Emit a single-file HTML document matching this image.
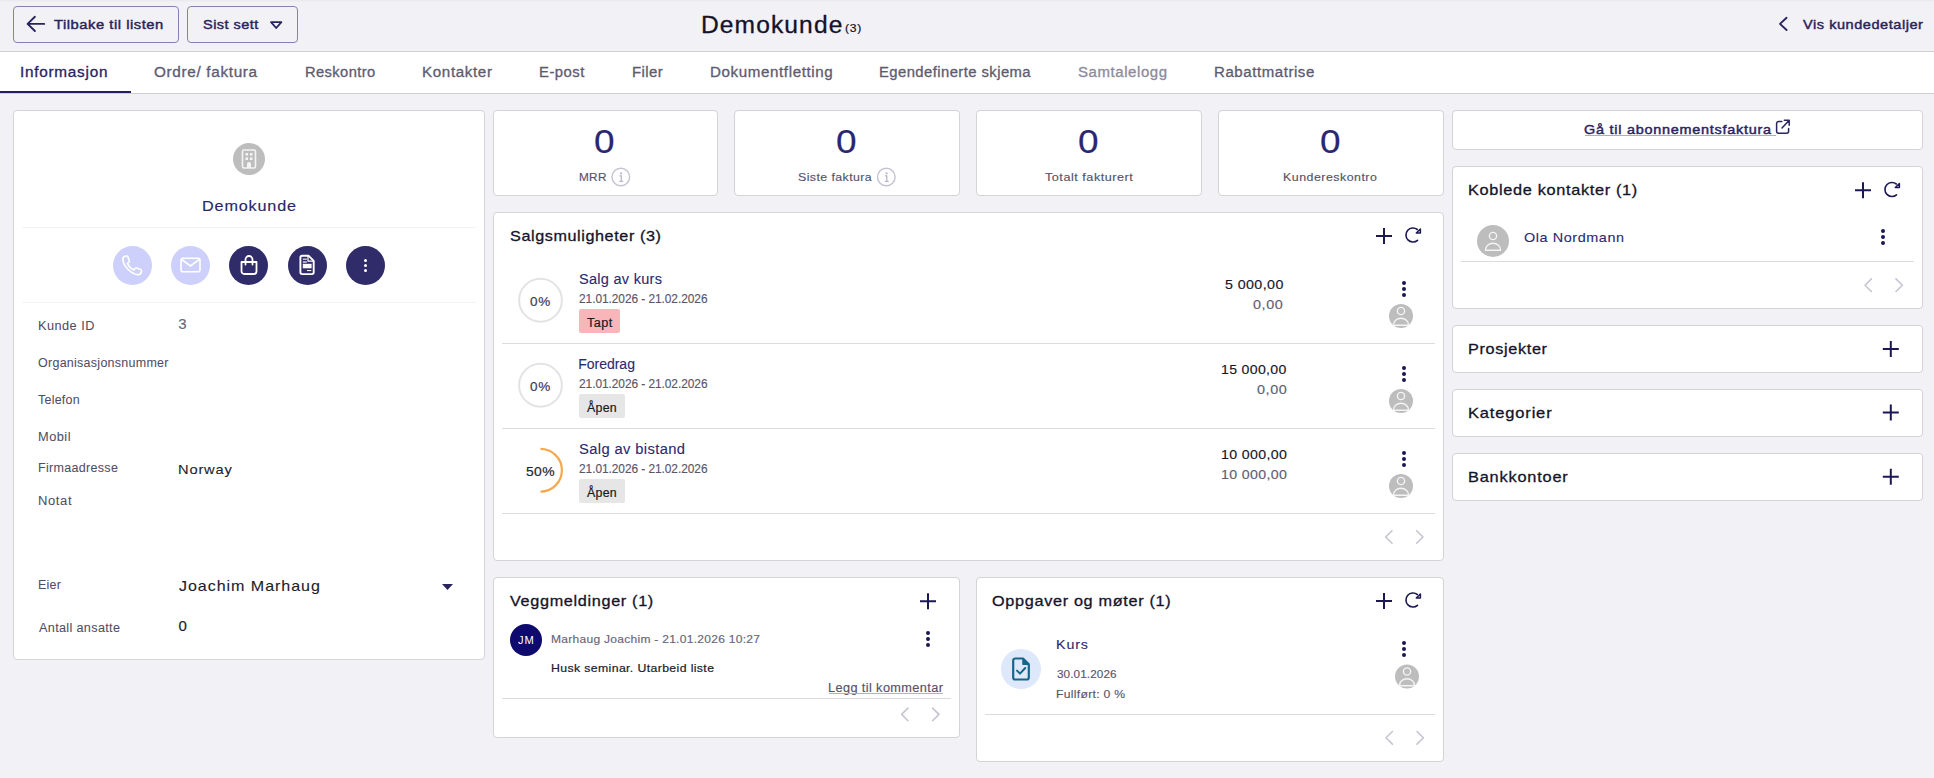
<!DOCTYPE html>
<html><head><meta charset="utf-8"><style>
html,body{margin:0;padding:0;}
body{width:1934px;height:778px;position:relative;overflow:hidden;background:#f2f1f6;font-family:"Liberation Sans",sans-serif;}
.t{position:absolute;white-space:nowrap;line-height:normal;}
.r{position:absolute;display:block;}
</style></head><body>
<div class="r" style="left:0px;top:0px;width:1934px;height:52px;background:#f2f1f6;"></div>
<div class="r" style="left:0px;top:51px;width:1934px;height:1px;background:#cdcdd2;"></div>
<div class="r" style="left:0px;top:50px;width:1934px;height:1px;background:#f4f3f7;"></div>
<div class="r" style="left:0px;top:0px;width:1934px;height:1px;background:#ebeaf0;"></div>
<div class="r" style="left:0px;top:1px;width:1934px;height:1px;background:#efeef3;"></div>
<div class="r" style="left:13px;top:6px;width:166px;height:37px;border:1.2px solid #8682ab;border-radius:4px;box-sizing:border-box;"></div>
<svg class="r" style="left:26px;top:15px;overflow:visible;" width="21" height="19" viewBox="0 0 21 19"><path d="M1.6 8.9 H18.2 M8.9 1.8 L1.6 8.9 L8.9 16" fill="none" stroke="#29245e" stroke-width="1.9" stroke-linecap="round" stroke-linejoin="round"/></svg>
<div class="t" style="left:54.17px;top:16.90px;font-size:13.5px;color:#29245e;transform:scaleX(1.0917);transform-origin:0 0;letter-spacing:0.489px;-webkit-text-stroke:0.45px #29245e;">Tilbake til listen</div>
<div class="r" style="left:187px;top:6px;width:111px;height:37px;border:1.2px solid #8682ab;border-radius:4px;box-sizing:border-box;"></div>
<div class="t" style="left:202.75px;top:17.00px;font-size:13.5px;color:#29245e;transform:scaleX(1.0732);transform-origin:0 0;letter-spacing:0.433px;-webkit-text-stroke:0.45px #29245e;">Sist sett</div>
<svg class="r" style="left:269px;top:20px;overflow:visible;" width="16" height="11" viewBox="0 0 16 11"><path d="M2 2.2 H12.4 L7.2 8 Z" fill="none" stroke="#29245e" stroke-width="1.8" stroke-linejoin="round"/></svg>
<div class="t" style="left:700.57px;top:11.90px;font-size:23px;color:#14132a;transform:scaleX(1.0683);transform-origin:0 0;letter-spacing:1.034px;-webkit-text-stroke:0.3px #14132a;">Demokunde</div>
<div class="t" style="left:844.94px;top:22.00px;font-size:11px;color:#14132a;transform:scaleX(1.1022);transform-origin:0 0;letter-spacing:0.618px;-webkit-text-stroke:0.2px #14132a;">(3)</div>
<svg class="r" style="left:1777px;top:15px;overflow:visible;" width="13" height="19" viewBox="0 0 13 19"><path d="M9.6 2.8 L3 8.9 L9.6 15" fill="none" stroke="#29245e" stroke-width="1.9" stroke-linecap="round" stroke-linejoin="round"/></svg>
<div class="t" style="left:1802.93px;top:17.00px;font-size:13.5px;color:#29245e;transform:scaleX(1.0774);transform-origin:0 0;letter-spacing:0.498px;-webkit-text-stroke:0.45px #29245e;">Vis kundedetaljer</div>
<div class="r" style="left:0px;top:52px;width:1934px;height:41px;background:#fff;"></div>
<div class="r" style="left:0px;top:93px;width:1934px;height:1px;background:#cfcfd4;"></div>
<div class="r" style="left:0px;top:91px;width:131px;height:2px;background:#231f60;"></div>
<div class="t" style="left:20.08px;top:63.90px;font-size:14px;color:#29245e;transform:scaleX(1.0946);transform-origin:0 0;letter-spacing:0.671px;-webkit-text-stroke:0.3px #29245e;">Informasjon</div>
<div class="t" style="left:153.87px;top:63.90px;font-size:14px;color:#5e5b70;transform:scaleX(1.0930);transform-origin:0 0;letter-spacing:0.613px;-webkit-text-stroke:0.3px #5e5b70;">Ordre/ faktura</div>
<div class="t" style="left:304.79px;top:63.90px;font-size:14px;color:#5e5b70;transform:scaleX(1.0496);transform-origin:0 0;letter-spacing:0.385px;-webkit-text-stroke:0.3px #5e5b70;">Reskontro</div>
<div class="t" style="left:421.75px;top:63.90px;font-size:14px;color:#5e5b70;transform:scaleX(1.0816);transform-origin:0 0;letter-spacing:0.597px;-webkit-text-stroke:0.3px #5e5b70;">Kontakter</div>
<div class="t" style="left:538.78px;top:63.90px;font-size:14px;color:#5e5b70;transform:scaleX(1.0595);transform-origin:0 0;letter-spacing:0.466px;-webkit-text-stroke:0.3px #5e5b70;">E-post</div>
<div class="t" style="left:631.57px;top:63.90px;font-size:14px;color:#5e5b70;transform:scaleX(1.0661);transform-origin:0 0;letter-spacing:0.428px;-webkit-text-stroke:0.3px #5e5b70;">Filer</div>
<div class="t" style="left:709.75px;top:63.90px;font-size:14px;color:#5e5b70;transform:scaleX(1.0816);transform-origin:0 0;letter-spacing:0.560px;-webkit-text-stroke:0.3px #5e5b70;">Dokumentfletting</div>
<div class="t" style="left:878.78px;top:63.90px;font-size:14px;color:#5e5b70;transform:scaleX(1.0583);transform-origin:0 0;letter-spacing:0.412px;-webkit-text-stroke:0.3px #5e5b70;">Egendefinerte skjema</div>
<div class="t" style="left:1078.23px;top:63.90px;font-size:14px;color:#8d8a9c;transform:scaleX(1.0703);transform-origin:0 0;letter-spacing:0.536px;-webkit-text-stroke:0.3px #8d8a9c;">Samtalelogg</div>
<div class="t" style="left:1214.16px;top:63.90px;font-size:14px;color:#5e5b70;transform:scaleX(1.0736);transform-origin:0 0;letter-spacing:0.524px;-webkit-text-stroke:0.3px #5e5b70;">Rabattmatrise</div>
<div class="r" style="left:0px;top:94px;width:1934px;height:684px;background:#f2f1f6;"></div>
<div class="r" style="left:13px;top:110px;width:472px;height:550px;background:#fff;border:1px solid #d3d3d8;border-radius:4px;box-sizing:border-box;"></div>
<div class="r" style="left:233px;top:143px;width:32px;height:32px;background:#bdbdbd;border-radius:50%;"></div>
<svg class="r" style="left:241px;top:149px;overflow:visible;" width="16" height="21" viewBox="0 0 16 21"><g transform="translate(0.500,0.000)"><rect x="1" y="1" width="13" height="18" rx="1.5" fill="none" stroke="#f4f4f4" stroke-width="1.6"/><rect x="4" y="4" width="2.6" height="2.6" fill="#f4f4f4"/><rect x="8.4" y="4" width="2.6" height="2.6" fill="#f4f4f4"/><rect x="4" y="8.4" width="2.6" height="2.6" fill="#f4f4f4"/><rect x="8.4" y="8.4" width="2.6" height="2.6" fill="#f4f4f4"/><path d="M5.5 19 V15 a2 2 0 0 1 4 0 V19 Z" fill="#f4f4f4"/></g></svg>
<div class="t" style="left:201.66px;top:196.80px;font-size:15px;color:#2a2668;transform:scaleX(1.0793);transform-origin:0 0;letter-spacing:0.783px;-webkit-text-stroke:0.15px #2a2668;">Demokunde</div>
<div class="r" style="left:22px;top:227px;width:454px;height:1px;background:#f3f3f5;"></div>
<div class="r" style="left:22px;top:302px;width:454px;height:1px;background:#f3f3f5;"></div>
<div class="r" style="left:112.5px;top:246px;width:39px;height:39px;background:#cdd0fa;border-radius:50%;"></div>
<div class="r" style="left:171.0px;top:246px;width:39px;height:39px;background:#cdd0fa;border-radius:50%;"></div>
<div class="r" style="left:229.0px;top:246px;width:39px;height:39px;background:#302b69;border-radius:50%;"></div>
<div class="r" style="left:287.5px;top:246px;width:39px;height:39px;background:#302b69;border-radius:50%;"></div>
<div class="r" style="left:346.0px;top:246px;width:39px;height:39px;background:#302b69;border-radius:50%;"></div>
<svg class="r" style="left:120px;top:253px;overflow:visible;" width="25" height="25" viewBox="0 0 25 25"><g transform="translate(0.000,0.500)"><g transform="translate(0.2,0.2) scale(1.1)"><path d="M4.8 2.2 C3.3 2.6 2.2 3.9 2.4 5.6 C3 11.2 9.8 18.4 15.8 19.1 C17.5 19.3 18.8 18.2 19.2 16.7 L19.4 15.8 C19.5 15.2 19.2 14.6 18.6 14.4 L15 13.1 C14.4 12.9 13.9 13.1 13.5 13.5 L12.5 14.8 C10 13.7 7.6 11.3 6.5 8.8 L7.8 7.8 C8.3 7.4 8.5 6.9 8.3 6.3 L7 2.8 C6.8 2.3 6.2 2 5.6 2.1 Z" fill="none" stroke="#fff" stroke-width="1.45" stroke-linejoin="round"/></g></g></svg>
<svg class="r" style="left:180px;top:257px;overflow:visible;" width="22" height="17" viewBox="0 0 22 17"><rect x="1" y="1.2" width="19" height="13.6" rx="2" fill="none" stroke="#fff" stroke-width="1.6"/><path d="M1.8 2.5 L10.5 9 L19.2 2.5" fill="none" stroke="#fff" stroke-width="1.6"/></svg>
<svg class="r" style="left:239px;top:254px;overflow:visible;" width="20" height="22" viewBox="0 0 20 22"><g transform="translate(0.500,0.000)"><path d="M2 8 H17 V17.2 a2.8 2.8 0 0 1 -2.8 2.8 H4.8 a2.8 2.8 0 0 1 -2.8 -2.8 Z" fill="none" stroke="#fff" stroke-width="1.8" stroke-linejoin="round"/><path d="M6 10.5 V5.5 a3.5 3.5 0 0 1 7 0 V10.5" fill="none" stroke="#fff" stroke-width="1.8" stroke-linecap="round"/></g></svg>
<svg class="r" style="left:298px;top:254px;overflow:visible;" width="19" height="23" viewBox="0 0 19 23"><path d="M2.4 3.5 a1.8 1.8 0 0 1 1.8 -1.8 H10.5 L15.7 6.9 V18.3 a1.8 1.8 0 0 1 -1.8 1.8 H4.2 a1.8 1.8 0 0 1 -1.8 -1.8 Z" fill="none" stroke="#fff" stroke-width="1.9" stroke-linejoin="round"/><path d="M10 2 V7.1 H15.4" fill="none" stroke="#fff" stroke-width="1.2"/><rect x="4.8" y="4.6" width="4" height="1.1" fill="#fff"/><rect x="4.8" y="7.4" width="4" height="1.2" fill="#fff"/><rect x="4.8" y="9.8" width="8.8" height="4.5" fill="#fff"/><rect x="9" y="16" width="4.3" height="1.1" fill="#fff"/></svg>
<div class="r" style="left:363.8px;top:258.6px;width:3.4px;height:3.4px;background:#fff;border-radius:50%;"></div>
<div class="r" style="left:363.8px;top:263.8px;width:3.4px;height:3.4px;background:#fff;border-radius:50%;"></div>
<div class="r" style="left:363.8px;top:269.0px;width:3.4px;height:3.4px;background:#fff;border-radius:50%;"></div>
<div class="t" style="left:37.55px;top:318.90px;font-size:12px;color:#4e4d62;transform:scaleX(1.0622);transform-origin:0 0;letter-spacing:0.431px;-webkit-text-stroke:0.05px #4e4d62;">Kunde ID</div>
<div class="t" style="left:38.01px;top:355.90px;font-size:12px;color:#4e4d62;transform:scaleX(1.0398);transform-origin:0 0;letter-spacing:0.265px;-webkit-text-stroke:0.05px #4e4d62;">Organisasjonsnummer</div>
<div class="t" style="left:38.32px;top:392.80px;font-size:12px;color:#4e4d62;transform:scaleX(1.0372);transform-origin:0 0;letter-spacing:0.233px;-webkit-text-stroke:0.05px #4e4d62;">Telefon</div>
<div class="t" style="left:37.54px;top:429.90px;font-size:12px;color:#4e4d62;transform:scaleX(1.0670);transform-origin:0 0;letter-spacing:0.450px;-webkit-text-stroke:0.05px #4e4d62;">Mobil</div>
<div class="t" style="left:37.57px;top:460.90px;font-size:12px;color:#4e4d62;transform:scaleX(1.0439);transform-origin:0 0;letter-spacing:0.287px;-webkit-text-stroke:0.05px #4e4d62;">Firmaadresse</div>
<div class="t" style="left:37.53px;top:493.80px;font-size:12px;color:#4e4d62;transform:scaleX(1.0835);transform-origin:0 0;letter-spacing:0.576px;-webkit-text-stroke:0.05px #4e4d62;">Notat</div>
<div class="t" style="left:37.57px;top:578.10px;font-size:12px;color:#4e4d62;transform:scaleX(1.0375);transform-origin:0 0;letter-spacing:0.252px;-webkit-text-stroke:0.05px #4e4d62;">Eier</div>
<div class="t" style="left:38.57px;top:621.00px;font-size:12px;color:#4e4d62;transform:scaleX(1.0556);transform-origin:0 0;letter-spacing:0.309px;-webkit-text-stroke:0.05px #4e4d62;">Antall ansatte</div>
<div class="t" style="left:178.24px;top:314.80px;font-size:15px;color:#63667a;-webkit-text-stroke:0.1px #63667a;">3</div>
<div class="t" style="left:178.09px;top:461.90px;font-size:13.5px;color:#1d1c2e;transform:scaleX(1.0858);transform-origin:0 0;letter-spacing:0.765px;-webkit-text-stroke:0.1px #1d1c2e;">Norway</div>
<div class="t" style="left:178.96px;top:577.60px;font-size:14.5px;color:#1d1c2e;transform:scaleX(1.1060);transform-origin:0 0;letter-spacing:0.864px;-webkit-text-stroke:0.1px #1d1c2e;">Joachim Marhaug</div>
<svg class="r" style="left:441px;top:583px;overflow:visible;" width="14" height="9" viewBox="0 0 14 9"><path d="M1 1 H12 L6.5 7 Z" fill="#29245e"/></svg>
<div class="t" style="left:178.60px;top:616.60px;font-size:15px;color:#1d1c2e;-webkit-text-stroke:0.2px #1d1c2e;">0</div>
<div class="r" style="left:493px;top:110px;width:225px;height:86px;background:#fff;border:1px solid #d3d3d8;border-radius:4px;box-sizing:border-box;"></div>
<div class="t" style="left:594.28px;top:123.00px;font-size:33px;color:#2a2770;-webkit-text-stroke:0.2px #2a2770;transform:scaleX(1.12);transform-origin:0 0;">0</div>
<div class="t" style="left:579.33px;top:170.80px;font-size:11.5px;color:#55536a;transform:scaleX(1.0241);transform-origin:0 0;letter-spacing:0.297px;-webkit-text-stroke:0.15px #55536a;">MRR</div>
<svg class="r" style="left:610px;top:167px;overflow:visible;" width="21" height="21" viewBox="0 0 21 21"><g transform="translate(0.800,0.000)"><circle cx="10" cy="10" r="8.8" fill="none" stroke="#c5c3d3" stroke-width="1.4"/><circle cx="10.3" cy="6.3" r="1.1" fill="#b9b7c9"/><path d="M8.6 8.9 H10.5 V14.4 M8.4 14.4 H12.4" fill="none" stroke="#b9b7c9" stroke-width="1.3"/></g></svg>
<div class="r" style="left:734px;top:110px;width:226px;height:86px;background:#fff;border:1px solid #d3d3d8;border-radius:4px;box-sizing:border-box;"></div>
<div class="t" style="left:835.78px;top:123.00px;font-size:33px;color:#2a2770;-webkit-text-stroke:0.2px #2a2770;transform:scaleX(1.12);transform-origin:0 0;">0</div>
<div class="t" style="left:797.94px;top:170.80px;font-size:11.5px;color:#55536a;transform:scaleX(1.0743);transform-origin:0 0;letter-spacing:0.393px;-webkit-text-stroke:0.15px #55536a;">Siste faktura</div>
<svg class="r" style="left:876px;top:167px;overflow:visible;" width="21" height="21" viewBox="0 0 21 21"><g transform="translate(0.300,0.000)"><circle cx="10" cy="10" r="8.8" fill="none" stroke="#c5c3d3" stroke-width="1.4"/><circle cx="10.3" cy="6.3" r="1.1" fill="#b9b7c9"/><path d="M8.6 8.9 H10.5 V14.4 M8.4 14.4 H12.4" fill="none" stroke="#b9b7c9" stroke-width="1.3"/></g></svg>
<div class="r" style="left:976px;top:110px;width:226px;height:86px;background:#fff;border:1px solid #d3d3d8;border-radius:4px;box-sizing:border-box;"></div>
<div class="t" style="left:1077.78px;top:123.00px;font-size:33px;color:#2a2770;-webkit-text-stroke:0.2px #2a2770;transform:scaleX(1.12);transform-origin:0 0;">0</div>
<div class="t" style="left:1045.02px;top:170.80px;font-size:11.5px;color:#55536a;transform:scaleX(1.0979);transform-origin:0 0;letter-spacing:0.473px;-webkit-text-stroke:0.15px #55536a;">Totalt fakturert</div>
<div class="r" style="left:1218px;top:110px;width:226px;height:86px;background:#fff;border:1px solid #d3d3d8;border-radius:4px;box-sizing:border-box;"></div>
<div class="t" style="left:1319.78px;top:123.00px;font-size:33px;color:#2a2770;-webkit-text-stroke:0.2px #2a2770;transform:scaleX(1.12);transform-origin:0 0;">0</div>
<div class="t" style="left:1283.48px;top:170.80px;font-size:11.5px;color:#55536a;transform:scaleX(1.0756);transform-origin:0 0;letter-spacing:0.464px;-webkit-text-stroke:0.15px #55536a;">Kundereskontro</div>
<div class="r" style="left:493px;top:212px;width:951px;height:349px;background:#fff;border:1px solid #d3d3d8;border-radius:4px;box-sizing:border-box;"></div>
<div class="t" style="left:509.67px;top:226.60px;font-size:15px;color:#14132a;transform:scaleX(1.0776);transform-origin:0 0;letter-spacing:0.554px;-webkit-text-stroke:0.3px #14132a;">Salgsmuligheter (3)</div>
<svg class="r" style="left:1375px;top:227px;overflow:visible;" width="18" height="18" viewBox="0 0 18 18"><g transform="translate(0.500,0.500)"><path d="M8.5 0.5 V16.5 M0.5 8.5 H16.5" stroke="#1c1853" stroke-width="2" fill="none"/></g></svg>
<svg class="r" style="left:1404px;top:226px;overflow:visible;" width="21" height="19" viewBox="0 0 21 19"><path d="M13.3 3.5 A7 7 0 1 0 13.5 14.36" fill="none" stroke="#1c1853" stroke-width="1.6" stroke-linecap="round"/><path d="M16.4 3 V7 H12.3 Z" fill="none" stroke="#1c1853" stroke-width="1.5" stroke-linejoin="round"/></svg>
<svg class="r" style="left:518px;top:277px;overflow:visible;" width="46" height="46" viewBox="0 0 46 46"><g transform="translate(0.000,0.750)"><circle cx="22.5" cy="22.5" r="21.4" fill="none" stroke="#e3e3e3" stroke-width="2"/></g></svg>
<div class="t" style="left:529.86px;top:294.00px;font-size:13px;color:#3d3c55;transform:scaleX(1.0383);transform-origin:0 0;letter-spacing:0.682px;-webkit-text-stroke:0.2px #3d3c55;">0%</div>
<div class="t" style="left:578.65px;top:271.00px;font-size:14px;color:#2c2870;transform:scaleX(1.0380);transform-origin:0 0;letter-spacing:0.263px;-webkit-text-stroke:0.1px #2c2870;">Salg av kurs</div>
<div class="t" style="left:578.71px;top:291.90px;font-size:12px;color:#58566b;transform:scaleX(0.9912);transform-origin:0 0;letter-spacing:-0.052px;-webkit-text-stroke:0.15px #58566b;">21.01.2026 - 21.02.2026</div>
<div class="r" style="left:579px;top:309.2px;width:40.7px;height:23.7px;background:#f9b6ba;border-radius:2px;"></div>
<div class="t" style="left:587.12px;top:316.00px;font-size:12px;color:#1a1a22;transform:scaleX(1.0541);transform-origin:0 0;letter-spacing:0.402px;-webkit-text-stroke:0.2px #1a1a22;">Tapt</div>
<div class="t" style="left:1224.63px;top:276.90px;font-size:13.5px;color:#15142a;transform:scaleX(1.0539);transform-origin:0 0;letter-spacing:0.396px;-webkit-text-stroke:0.15px #15142a;">5 000,00</div>
<div class="t" style="left:1253.22px;top:296.90px;font-size:13.5px;color:#5f5d72;transform:scaleX(1.0651);transform-origin:0 0;letter-spacing:0.547px;-webkit-text-stroke:0.15px #5f5d72;">0,00</div>
<div class="r" style="left:1402.05px;top:280.85px;width:3.9px;height:3.9px;background:#1c1853;border-radius:50%;"></div>
<div class="r" style="left:1402.05px;top:287.15000000000003px;width:3.9px;height:3.9px;background:#1c1853;border-radius:50%;"></div>
<div class="r" style="left:1402.05px;top:293.45000000000005px;width:3.9px;height:3.9px;background:#1c1853;border-radius:50%;"></div>
<svg class="r" style="left:1389px;top:304px;overflow:visible;" width="25" height="25" viewBox="0 0 25 25"><circle cx="12.0" cy="12.0" r="12.0" fill="#bdbdbd"/><circle cx="12.0" cy="7.0" r="3.6" fill="none" stroke="#f4f4f4" stroke-width="1.4"/><path d="M4.4 21.2 A7.6 7 0 0 1 19.6 21.2 Z" fill="none" stroke="#f4f4f4" stroke-width="1.4" stroke-linejoin="round"/></svg>
<div class="r" style="left:502px;top:342.5px;width:933px;height:1px;background:#dcdce0;"></div>
<svg class="r" style="left:518px;top:362px;overflow:visible;" width="46" height="46" viewBox="0 0 46 46"><g transform="translate(0.000,0.750)"><circle cx="22.5" cy="22.5" r="21.4" fill="none" stroke="#e3e3e3" stroke-width="2"/></g></svg>
<div class="t" style="left:529.86px;top:379.00px;font-size:13px;color:#3d3c55;transform:scaleX(1.0383);transform-origin:0 0;letter-spacing:0.682px;-webkit-text-stroke:0.2px #3d3c55;">0%</div>
<div class="t" style="left:578.14px;top:356.00px;font-size:14px;color:#2c2870;-webkit-text-stroke:0.1px #2c2870;">Foredrag</div>
<div class="t" style="left:578.71px;top:376.90px;font-size:12px;color:#58566b;transform:scaleX(0.9912);transform-origin:0 0;letter-spacing:-0.052px;-webkit-text-stroke:0.15px #58566b;">21.01.2026 - 21.02.2026</div>
<div class="r" style="left:579px;top:394.2px;width:45.8px;height:23.7px;background:#e6e6e6;border-radius:2px;"></div>
<div class="t" style="left:587.37px;top:401.00px;font-size:12px;color:#1a1a22;transform:scaleX(1.0300);transform-origin:0 0;letter-spacing:0.273px;-webkit-text-stroke:0.2px #1a1a22;">Åpen</div>
<div class="t" style="left:1220.94px;top:361.90px;font-size:13.5px;color:#15142a;transform:scaleX(1.0433);transform-origin:0 0;letter-spacing:0.317px;-webkit-text-stroke:0.15px #15142a;">15 000,00</div>
<div class="t" style="left:1256.52px;top:381.90px;font-size:13.5px;color:#5f5d72;transform:scaleX(1.0651);transform-origin:0 0;letter-spacing:0.547px;-webkit-text-stroke:0.15px #5f5d72;">0,00</div>
<div class="r" style="left:1402.05px;top:365.85px;width:3.9px;height:3.9px;background:#1c1853;border-radius:50%;"></div>
<div class="r" style="left:1402.05px;top:372.15000000000003px;width:3.9px;height:3.9px;background:#1c1853;border-radius:50%;"></div>
<div class="r" style="left:1402.05px;top:378.45000000000005px;width:3.9px;height:3.9px;background:#1c1853;border-radius:50%;"></div>
<svg class="r" style="left:1389px;top:389px;overflow:visible;" width="25" height="25" viewBox="0 0 25 25"><circle cx="12.0" cy="12.0" r="12.0" fill="#bdbdbd"/><circle cx="12.0" cy="7.0" r="3.6" fill="none" stroke="#f4f4f4" stroke-width="1.4"/><path d="M4.4 21.2 A7.6 7 0 0 1 19.6 21.2 Z" fill="none" stroke="#f4f4f4" stroke-width="1.4" stroke-linejoin="round"/></svg>
<div class="r" style="left:502px;top:427.5px;width:933px;height:1px;background:#dcdce0;"></div>
<svg class="r" style="left:518px;top:447px;overflow:visible;" width="46" height="46" viewBox="0 0 46 46"><g transform="translate(0.000,0.750)"><path d="M22.5 1.1 A21.4 21.4 0 0 1 22.5 43.9" fill="none" stroke="#f6a94b" stroke-width="2.2"/></g></svg>
<div class="t" style="left:525.64px;top:463.80px;font-size:13.5px;color:#1f1f2c;transform:scaleX(1.0280);transform-origin:0 0;letter-spacing:0.365px;-webkit-text-stroke:0.2px #1f1f2c;">50%</div>
<div class="t" style="left:578.64px;top:441.00px;font-size:14px;color:#2c2870;transform:scaleX(1.0526);transform-origin:0 0;letter-spacing:0.354px;-webkit-text-stroke:0.1px #2c2870;">Salg av bistand</div>
<div class="t" style="left:578.71px;top:461.90px;font-size:12px;color:#58566b;transform:scaleX(0.9912);transform-origin:0 0;letter-spacing:-0.052px;-webkit-text-stroke:0.15px #58566b;">21.01.2026 - 21.02.2026</div>
<div class="r" style="left:579px;top:479.2px;width:45.8px;height:23.7px;background:#e6e6e6;border-radius:2px;"></div>
<div class="t" style="left:587.37px;top:486.00px;font-size:12px;color:#1a1a22;transform:scaleX(1.0300);transform-origin:0 0;letter-spacing:0.273px;-webkit-text-stroke:0.2px #1a1a22;">Åpen</div>
<div class="t" style="left:1220.64px;top:446.90px;font-size:13.5px;color:#15142a;transform:scaleX(1.0474);transform-origin:0 0;letter-spacing:0.347px;-webkit-text-stroke:0.15px #15142a;">10 000,00</div>
<div class="t" style="left:1220.64px;top:466.90px;font-size:13.5px;color:#5f5d72;transform:scaleX(1.0474);transform-origin:0 0;letter-spacing:0.347px;-webkit-text-stroke:0.15px #5f5d72;">10 000,00</div>
<div class="r" style="left:1402.05px;top:450.85px;width:3.9px;height:3.9px;background:#1c1853;border-radius:50%;"></div>
<div class="r" style="left:1402.05px;top:457.15000000000003px;width:3.9px;height:3.9px;background:#1c1853;border-radius:50%;"></div>
<div class="r" style="left:1402.05px;top:463.45000000000005px;width:3.9px;height:3.9px;background:#1c1853;border-radius:50%;"></div>
<svg class="r" style="left:1389px;top:474px;overflow:visible;" width="25" height="25" viewBox="0 0 25 25"><circle cx="12.0" cy="12.0" r="12.0" fill="#bdbdbd"/><circle cx="12.0" cy="7.0" r="3.6" fill="none" stroke="#f4f4f4" stroke-width="1.4"/><path d="M4.4 21.2 A7.6 7 0 0 1 19.6 21.2 Z" fill="none" stroke="#f4f4f4" stroke-width="1.4" stroke-linejoin="round"/></svg>
<div class="r" style="left:502px;top:512.5px;width:933px;height:1px;background:#dcdce0;"></div>
<svg class="r" style="left:1383px;top:529px;overflow:visible;" width="11" height="17" viewBox="0 0 11 17"><g transform="translate(0.800,0.400)"><path d="M8.2 1.3 L1.8 7.6 L8.2 13.9" fill="none" stroke="#c6c4d4" stroke-width="1.6" stroke-linecap="round" stroke-linejoin="round"/></g></svg>
<svg class="r" style="left:1414px;top:529px;overflow:visible;" width="11" height="17" viewBox="0 0 11 17"><g transform="translate(0.800,0.400)"><path d="M1.8 1.3 L8.2 7.6 L1.8 13.9" fill="none" stroke="#c6c4d4" stroke-width="1.6" stroke-linecap="round" stroke-linejoin="round"/></g></svg>
<div class="r" style="left:493px;top:577px;width:467px;height:161px;background:#fff;border:1px solid #d3d3d8;border-radius:4px;box-sizing:border-box;"></div>
<div class="t" style="left:510.32px;top:591.70px;font-size:15px;color:#14132a;transform:scaleX(1.0815);transform-origin:0 0;letter-spacing:0.619px;-webkit-text-stroke:0.3px #14132a;">Veggmeldinger (1)</div>
<svg class="r" style="left:919px;top:592px;overflow:visible;" width="18" height="18" viewBox="0 0 18 18"><g transform="translate(0.500,0.800)"><path d="M8.5 0.5 V16.5 M0.5 8.5 H16.5" stroke="#1c1853" stroke-width="2" fill="none"/></g></svg>
<div class="r" style="left:510px;top:624px;width:32px;height:32px;background:#0e0a6e;border-radius:50%;"></div>
<div class="t" style="left:518.33px;top:634.00px;font-size:10.5px;color:#fff;transform:scaleX(1.0611);transform-origin:0 0;letter-spacing:0.792px;">JM</div>
<div class="t" style="left:551.01px;top:632.90px;font-size:11.5px;color:#67657a;transform:scaleX(1.0455);transform-origin:0 0;letter-spacing:0.262px;-webkit-text-stroke:0.15px #67657a;">Marhaug Joachim - 21.01.2026 10:27</div>
<div class="r" style="left:926.05px;top:630.85px;width:3.9px;height:3.9px;background:#1c1853;border-radius:50%;"></div>
<div class="r" style="left:926.05px;top:637.15px;width:3.9px;height:3.9px;background:#1c1853;border-radius:50%;"></div>
<div class="r" style="left:926.05px;top:643.4499999999999px;width:3.9px;height:3.9px;background:#1c1853;border-radius:50%;"></div>
<div class="t" style="left:550.99px;top:661.80px;font-size:11.5px;color:#20202c;transform:scaleX(1.0672);transform-origin:0 0;letter-spacing:0.353px;-webkit-text-stroke:0.2px #20202c;">Husk seminar. Utarbeid liste</div>
<div class="t" style="left:828.25px;top:680.90px;font-size:12px;color:#55536a;transform:scaleX(1.0617);transform-origin:0 0;letter-spacing:0.366px;-webkit-text-stroke:0.15px #55536a;">Legg til kommentar</div>
<div class="r" style="left:829px;top:693px;width:114px;height:1px;background:#b3b1c2;"></div>
<div class="r" style="left:502px;top:698px;width:449px;height:1px;background:#dcdce0;"></div>
<svg class="r" style="left:899px;top:706px;overflow:visible;" width="11" height="17" viewBox="0 0 11 17"><g transform="translate(0.800,0.800)"><path d="M8.2 1.3 L1.8 7.6 L8.2 13.9" fill="none" stroke="#c6c4d4" stroke-width="1.6" stroke-linecap="round" stroke-linejoin="round"/></g></svg>
<svg class="r" style="left:930px;top:706px;overflow:visible;" width="11" height="17" viewBox="0 0 11 17"><g transform="translate(0.800,0.800)"><path d="M1.8 1.3 L8.2 7.6 L1.8 13.9" fill="none" stroke="#c6c4d4" stroke-width="1.6" stroke-linecap="round" stroke-linejoin="round"/></g></svg>
<div class="r" style="left:976px;top:577px;width:468px;height:185px;background:#fff;border:1px solid #d3d3d8;border-radius:4px;box-sizing:border-box;"></div>
<div class="t" style="left:992.33px;top:591.60px;font-size:15px;color:#14132a;transform:scaleX(1.0826);transform-origin:0 0;letter-spacing:0.623px;-webkit-text-stroke:0.3px #14132a;">Oppgaver og møter (1)</div>
<svg class="r" style="left:1375px;top:592px;overflow:visible;" width="18" height="18" viewBox="0 0 18 18"><g transform="translate(0.500,0.500)"><path d="M8.5 0.5 V16.5 M0.5 8.5 H16.5" stroke="#1c1853" stroke-width="2" fill="none"/></g></svg>
<svg class="r" style="left:1404px;top:591px;overflow:visible;" width="21" height="19" viewBox="0 0 21 19"><path d="M13.3 3.5 A7 7 0 1 0 13.5 14.36" fill="none" stroke="#1c1853" stroke-width="1.6" stroke-linecap="round"/><path d="M16.4 3 V7 H12.3 Z" fill="none" stroke="#1c1853" stroke-width="1.5" stroke-linejoin="round"/></svg>
<div class="r" style="left:1001px;top:649px;width:40px;height:40px;background:#dde8fb;border-radius:50%;"></div>
<svg class="r" style="left:1011px;top:657px;overflow:visible;" width="21" height="25" viewBox="0 0 21 25"><path d="M2.2 3.5 a2 2 0 0 1 2 -2 H12 L17.8 7.3 V20.5 a2 2 0 0 1 -2 2 H4.2 a2 2 0 0 1 -2 -2 Z" fill="none" stroke="#17668a" stroke-width="2.2" stroke-linejoin="round"/><path d="M12 1.5 V7.3 H17.8" fill="#17668a" stroke="#17668a" stroke-width="1.5" stroke-linejoin="round"/><path d="M6 13.6 L9 16.6 L14.2 11" fill="none" stroke="#17668a" stroke-width="2" stroke-linecap="round" stroke-linejoin="round"/></svg>
<div class="t" style="left:1056.22px;top:636.80px;font-size:13px;color:#2c2870;transform:scaleX(1.0968);transform-origin:0 0;letter-spacing:0.813px;-webkit-text-stroke:0.1px #2c2870;">Kurs</div>
<div class="t" style="left:1056.96px;top:668.00px;font-size:11.5px;color:#58566b;transform:scaleX(1.0172);transform-origin:0 0;letter-spacing:0.108px;-webkit-text-stroke:0.15px #58566b;">30.01.2026</div>
<div class="t" style="left:1056.40px;top:687.80px;font-size:11.5px;color:#58566b;transform:scaleX(1.0559);transform-origin:0 0;letter-spacing:0.282px;-webkit-text-stroke:0.15px #58566b;">Fullført: 0 %</div>
<div class="r" style="left:1401.75px;top:640.75px;width:3.9px;height:3.9px;background:#1c1853;border-radius:50%;"></div>
<div class="r" style="left:1401.75px;top:647.05px;width:3.9px;height:3.9px;background:#1c1853;border-radius:50%;"></div>
<div class="r" style="left:1401.75px;top:653.3499999999999px;width:3.9px;height:3.9px;background:#1c1853;border-radius:50%;"></div>
<svg class="r" style="left:1395px;top:664px;overflow:visible;" width="25" height="25" viewBox="0 0 25 25"><g transform="translate(0.000,0.500)"><circle cx="12.0" cy="12.0" r="12.0" fill="#bdbdbd"/><circle cx="12.0" cy="7.0" r="3.6" fill="none" stroke="#f4f4f4" stroke-width="1.4"/><path d="M4.4 21.2 A7.6 7 0 0 1 19.6 21.2 Z" fill="none" stroke="#f4f4f4" stroke-width="1.4" stroke-linejoin="round"/></g></svg>
<div class="r" style="left:985px;top:714px;width:450px;height:1px;background:#dcdce0;"></div>
<svg class="r" style="left:1384px;top:730px;overflow:visible;" width="11" height="17" viewBox="0 0 11 17"><g transform="translate(0.200,0.200)"><path d="M8.2 1.3 L1.8 7.6 L8.2 13.9" fill="none" stroke="#c6c4d4" stroke-width="1.6" stroke-linecap="round" stroke-linejoin="round"/></g></svg>
<svg class="r" style="left:1415px;top:730px;overflow:visible;" width="11" height="17" viewBox="0 0 11 17"><g transform="translate(0.200,0.200)"><path d="M1.8 1.3 L8.2 7.6 L1.8 13.9" fill="none" stroke="#c6c4d4" stroke-width="1.6" stroke-linecap="round" stroke-linejoin="round"/></g></svg>
<div class="r" style="left:1452px;top:110px;width:471px;height:40px;background:#fff;border:1px solid #d3d3d8;border-radius:4px;box-sizing:border-box;"></div>
<div class="t" style="left:1584.28px;top:121.50px;font-size:13px;color:#29245e;transform:scaleX(1.1080);transform-origin:0 0;letter-spacing:0.683px;-webkit-text-stroke:0.45px #29245e;">Gå til abonnementsfaktura</div>
<div class="r" style="left:1585px;top:135px;width:190.5px;height:1px;background:#aeabc4;"></div>
<svg class="r" style="left:1774px;top:118px;overflow:visible;" width="19" height="19" viewBox="0 0 19 19"><path d="M7.8 3.4 H4.6 a2 2 0 0 0 -2 2 V13.2 a2 2 0 0 0 2 2 H12.6 a2 2 0 0 0 2 -2 V10.4" fill="none" stroke="#29245e" stroke-width="1.5" stroke-linecap="round"/><path d="M10.3 2.3 H15.2 V7.3 M15 2.5 L8 10" fill="none" stroke="#29245e" stroke-width="1.5" stroke-linecap="round" stroke-linejoin="round"/></svg>
<div class="r" style="left:1452px;top:166px;width:471px;height:143px;background:#fff;border:1px solid #d3d3d8;border-radius:4px;box-sizing:border-box;"></div>
<div class="t" style="left:1467.75px;top:180.80px;font-size:15px;color:#14132a;transform:scaleX(1.0870);transform-origin:0 0;letter-spacing:0.614px;-webkit-text-stroke:0.3px #14132a;">Koblede kontakter (1)</div>
<svg class="r" style="left:1854px;top:181px;overflow:visible;" width="18" height="18" viewBox="0 0 18 18"><g transform="translate(0.500,0.800)"><path d="M8.5 0.5 V16.5 M0.5 8.5 H16.5" stroke="#1c1853" stroke-width="2" fill="none"/></g></svg>
<svg class="r" style="left:1883px;top:180px;overflow:visible;" width="21" height="19" viewBox="0 0 21 19"><g transform="translate(0.000,0.500)"><path d="M13.3 3.5 A7 7 0 1 0 13.5 14.36" fill="none" stroke="#1c1853" stroke-width="1.6" stroke-linecap="round"/><path d="M16.4 3 V7 H12.3 Z" fill="none" stroke="#1c1853" stroke-width="1.5" stroke-linejoin="round"/></g></svg>
<svg class="r" style="left:1477px;top:225px;overflow:visible;" width="33" height="33" viewBox="0 0 33 33"><circle cx="16.0" cy="16.0" r="16.0" fill="#bdbdbd"/><circle cx="16.0" cy="11.0" r="3.6" fill="none" stroke="#f4f4f4" stroke-width="1.4"/><path d="M8.4 25.2 A7.6 7 0 0 1 23.6 25.2 Z" fill="none" stroke="#f4f4f4" stroke-width="1.4" stroke-linejoin="round"/></svg>
<div class="t" style="left:1524.12px;top:229.80px;font-size:13.5px;color:#2c2870;transform:scaleX(1.0678);transform-origin:0 0;letter-spacing:0.532px;-webkit-text-stroke:0.1px #2c2870;">Ola Nordmann</div>
<div class="r" style="left:1881.25px;top:228.75px;width:3.9px;height:3.9px;background:#1c1853;border-radius:50%;"></div>
<div class="r" style="left:1881.25px;top:235.05px;width:3.9px;height:3.9px;background:#1c1853;border-radius:50%;"></div>
<div class="r" style="left:1881.25px;top:241.35000000000002px;width:3.9px;height:3.9px;background:#1c1853;border-radius:50%;"></div>
<div class="r" style="left:1461px;top:261px;width:453px;height:1px;background:#dcdce0;"></div>
<svg class="r" style="left:1863px;top:277px;overflow:visible;" width="11" height="17" viewBox="0 0 11 17"><g transform="translate(0.200,0.600)"><path d="M8.2 1.3 L1.8 7.6 L8.2 13.9" fill="none" stroke="#c6c4d4" stroke-width="1.6" stroke-linecap="round" stroke-linejoin="round"/></g></svg>
<svg class="r" style="left:1894px;top:277px;overflow:visible;" width="11" height="17" viewBox="0 0 11 17"><g transform="translate(0.200,0.600)"><path d="M1.8 1.3 L8.2 7.6 L1.8 13.9" fill="none" stroke="#c6c4d4" stroke-width="1.6" stroke-linecap="round" stroke-linejoin="round"/></g></svg>
<div class="r" style="left:1452px;top:325px;width:471px;height:48px;background:#fff;border:1px solid #d3d3d8;border-radius:4px;box-sizing:border-box;"></div>
<div class="t" style="left:1467.86px;top:339.90px;font-size:15px;color:#14132a;transform:scaleX(1.0826);transform-origin:0 0;letter-spacing:0.606px;-webkit-text-stroke:0.3px #14132a;">Prosjekter</div>
<svg class="r" style="left:1882px;top:340px;overflow:visible;" width="18" height="18" viewBox="0 0 18 18"><g transform="translate(0.300,0.600)"><path d="M8.5 0.5 V16.5 M0.5 8.5 H16.5" stroke="#1c1853" stroke-width="2" fill="none"/></g></svg>
<div class="r" style="left:1452px;top:389px;width:471px;height:48px;background:#fff;border:1px solid #d3d3d8;border-radius:4px;box-sizing:border-box;"></div>
<div class="t" style="left:1467.84px;top:403.70px;font-size:15px;color:#14132a;transform:scaleX(1.1004);transform-origin:0 0;letter-spacing:0.755px;-webkit-text-stroke:0.3px #14132a;">Kategorier</div>
<svg class="r" style="left:1882px;top:404px;overflow:visible;" width="18" height="18" viewBox="0 0 18 18"><g transform="translate(0.300,0.100)"><path d="M8.5 0.5 V16.5 M0.5 8.5 H16.5" stroke="#1c1853" stroke-width="2" fill="none"/></g></svg>
<div class="r" style="left:1452px;top:453px;width:471px;height:48px;background:#fff;border:1px solid #d3d3d8;border-radius:4px;box-sizing:border-box;"></div>
<div class="t" style="left:1467.85px;top:467.70px;font-size:15px;color:#14132a;transform:scaleX(1.0893);transform-origin:0 0;letter-spacing:0.739px;-webkit-text-stroke:0.3px #14132a;">Bankkontoer</div>
<svg class="r" style="left:1882px;top:468px;overflow:visible;" width="18" height="18" viewBox="0 0 18 18"><g transform="translate(0.300,0.300)"><path d="M8.5 0.5 V16.5 M0.5 8.5 H16.5" stroke="#1c1853" stroke-width="2" fill="none"/></g></svg>
</body></html>
